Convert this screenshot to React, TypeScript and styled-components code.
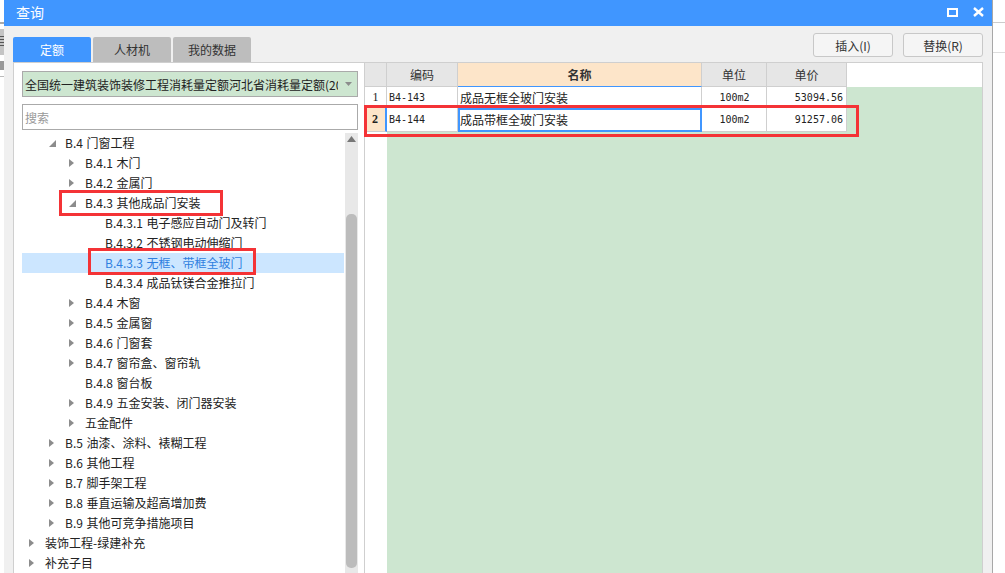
import React from 'react';
import styled, { createGlobalStyle } from 'styled-components';

const GlobalStyle = createGlobalStyle`
  html, body {
    margin: 0;
    padding: 0;
    background: #fff;
    overflow: hidden;
  }
  * {
    box-sizing: border-box;
  }
`;

const FONT = `"Noto Sans CJK SC", "Liberation Sans", sans-serif`;
const BLUE = '#4096ff';
const PEACH = '#fde5c9';
const GREEN = '#cde6d0';
const LINE = '#cfcfcf';

const Page = styled.div`
  position: relative;
  display: flex;
  width: 1005px;
  height: 573px;
  overflow: hidden;
  font-family: ${FONT};
  font-size: 12px;
  color: #222;
`;

const LeftSliver = styled.div`
  width: 4px;
  flex: none;
  background:
    linear-gradient(
      to bottom,
      transparent 0 36px,
      #555 36px 37px,
      transparent 37px 39px,
      #555 39px 40px,
      transparent 40px 42px,
      #555 42px 43px,
      transparent 43px 45px,
      #555 45px 46px,
      transparent 46px
    ),
    linear-gradient(
      to bottom,
      #fff 0 22px,
      #aaa 22px 24px,
      #fff 24px 29px,
      #c4c4c4 29px 55px,
      #fff 55px 61px,
      #999 61px 70px,
      #fff 70px 76px,
      #bbb 76px 77px,
      #fff 77px
    );
`;

const RightSliver = styled.div`
  flex: 1;
  background: linear-gradient(
    to bottom,
    #fff 0 22px,
    #ccc 22px 23px,
    #fff 23px 52px,
    #ddd 52px 53px,
    #fff 53px
  );
`;

const Window = styled.div`
  width: 989px;
  flex: none;
  display: flex;
  flex-direction: column;
  background: #f0f0f0;
  border-right: 1px solid #a8a8a8;
`;

const TitleBar = styled.div`
  height: 26px;
  flex: none;
  display: flex;
  align-items: center;
  padding: 0 8px 2px 12px;
  background: ${BLUE};
  color: #fff;
  font-size: 14px;
`;

const Title = styled.span`
  flex: 1;
`;

const WindowControl = styled.svg`
  display: block;
  margin-left: 15px;
`;

const Body = styled.div`
  flex: 1;
  min-height: 0;
  display: flex;
  flex-direction: column;
  padding: 0 9px;
`;

const TopRow = styled.div`
  height: 36px;
  flex: none;
  display: flex;
  align-items: flex-end;
  justify-content: space-between;
`;

const Tabs = styled.div`
  display: flex;
  gap: 2px;
`;

const Tab = styled.div<{ $active?: boolean }>`
  width: 78px;
  height: 25px;
  display: flex;
  align-items: center;
  justify-content: center;
  border-radius: 2px 2px 0 0;
  background: ${(p) => (p.$active ? BLUE : '#bdbdbd')};
  color: ${(p) => (p.$active ? '#fff' : '#333')};
`;

const Actions = styled.div`
  display: flex;
  gap: 10px;
  margin-bottom: 5px;
`;

const ActionButton = styled.button`
  width: 80px;
  height: 24px;
  padding: 0;
  background: #f5f5f5;
  border: 1px solid #c8c8c8;
  border-radius: 3px;
  font-family: ${FONT};
  font-size: 12px;
  color: #333;
`;

const Panels = styled.div`
  flex: 1;
  min-height: 0;
  display: flex;
`;

const LeftPanel = styled.div`
  width: 352px;
  flex: none;
  display: flex;
  flex-direction: column;
  padding: 8px 6px 0 8px;
  background: #fff;
  border: 1px solid ${LINE};
  border-bottom: none;
`;

const Combo = styled.div`
  height: 26px;
  flex: none;
  display: flex;
  align-items: center;
  padding-left: 2px;
  background: ${GREEN};
  border: 1px solid #aaa;
`;

const ComboText = styled.span`
  width: 313px;
  flex: none;
  overflow: hidden;
  white-space: nowrap;
`;

const ComboCaret = styled.svg`
  display: block;
  margin-left: 7px;
`;

const Search = styled.div`
  height: 26px;
  flex: none;
  display: flex;
  align-items: center;
  margin-top: 7px;
  padding-left: 2px;
  border: 1px solid #aaa;
  color: #999;
`;

const TreeArea = styled.div`
  flex: 1;
  min-height: 0;
  display: flex;
  margin-top: 3px;
`;

const TreeList = styled.div`
  flex: 1;
  min-width: 0;
  margin-right: 1px;
`;

const TreeRow = styled.div<{ $level: number; $selected?: boolean }>`
  height: 20px;
  display: flex;
  align-items: center;
  padding: 0 0 2px ${(p) => p.$level * 20 + 7}px;
  background: ${(p) => (p.$selected ? '#cce6ff' : 'transparent')};
  color: ${(p) => (p.$selected ? '#2f7fe0' : '#222')};
  white-space: pre;
  word-spacing: 1px;
`;

const ArrowSlot = styled.span`
  width: 16px;
  flex: none;
  display: flex;
  align-items: center;
  padding-top: 2px;
`;

const ScrollTrack = styled.div`
  width: 13px;
  flex: none;
  display: flex;
  flex-direction: column;
  align-items: center;
  background: #e8e8e8;
`;

const ScrollUp = styled.svg`
  display: block;
  flex: none;
  margin-top: 3px;
`;

const ScrollThumb = styled.div`
  width: 11px;
  height: 354px;
  flex: none;
  margin-top: 72px;
  border-radius: 5px;
  background: #bcbcbc;
`;

const GridPanel = styled.div`
  width: 618px;
  flex: none;
  display: grid;
  grid-template-columns: 22px 71px 244px 65px 80px 1fr;
  grid-template-rows: 24px 21px 24px 1fr;
  background: #fff;
  border-right: 1px solid ${LINE};
  border-top: 1px solid ${LINE};
`;

const HeaderCell = styled.div<{ $sorted?: boolean }>`
  display: flex;
  align-items: center;
  justify-content: center;
  background: ${(p) => (p.$sorted ? PEACH : '#e6e6e6')};
  border-right: 1px solid ${LINE};
  border-bottom: 1px solid ${(p) => (p.$sorted ? BLUE : LINE)};
  font-weight: ${(p) => (p.$sorted ? 700 : 400)};
  color: #333;
`;

const RowHead = styled.div<{ $current?: boolean }>`
  display: flex;
  align-items: center;
  justify-content: center;
  background: ${(p) => (p.$current ? PEACH : '#fff')};
  border-right: ${(p) => (p.$current ? `2px solid ${BLUE}` : `1px solid ${LINE}`)};
  border-bottom: 1px solid ${LINE};
  font-family: "Liberation Serif", serif;
  font-size: 12px;
  font-weight: ${(p) => (p.$current ? 700 : 400)};
`;

const Cell = styled.div<{ $align?: string; $focused?: boolean; $mono?: boolean }>`
  display: flex;
  align-items: center;
  justify-content: ${(p) => p.$align || 'flex-start'};
  padding: 0 ${(p) => (p.$align === 'flex-end' ? '3px' : '1px')} 0 2px;
  background: #fff;
  border-right: 1px solid ${LINE};
  border-bottom: 1px solid ${LINE};
  outline: ${(p) => (p.$focused ? `2px solid ${BLUE}` : 'none')};
  outline-offset: -2px;
  font-family: ${(p) => (p.$mono ? `"DejaVu Sans Mono", monospace` : FONT)};
  font-size: ${(p) => (p.$mono ? '10px' : '12px')};
  color: #222;
`;

const GreenSide = styled.div`
  grid-column: 6;
  grid-row: 2 / 4;
  background: ${GREEN};
`;

const GreenFill = styled.div`
  grid-column: 2 / -1;
  grid-row: 4;
  background: ${GREEN};
`;

const RedMark = styled.div<{ $x: number; $y: number; $w: number; $h: number }>`
  position: absolute;
  left: ${(p) => p.$x}px;
  top: ${(p) => p.$y}px;
  width: ${(p) => p.$w}px;
  height: ${(p) => p.$h}px;
  border: 3px solid #f43336;
  pointer-events: none;
`;

type Node = {
  label: string;
  level: number;
  arrow?: 'open' | 'closed';
  selected?: boolean;
};

const NODES: Node[] = [
  { label: 'B.4 门窗工程', level: 1, arrow: 'open' },
  { label: 'B.4.1 木门', level: 2, arrow: 'closed' },
  { label: 'B.4.2 金属门', level: 2, arrow: 'closed' },
  { label: 'B.4.3 其他成品门安装', level: 2, arrow: 'open' },
  { label: 'B.4.3.1 电子感应自动门及转门', level: 3 },
  { label: 'B.4.3.2 不锈钢电动伸缩门', level: 3 },
  { label: 'B.4.3.3 无框、带框全玻门', level: 3, selected: true },
  { label: 'B.4.3.4 成品钛镁合金推拉门', level: 3 },
  { label: 'B.4.4 木窗', level: 2, arrow: 'closed' },
  { label: 'B.4.5 金属窗', level: 2, arrow: 'closed' },
  { label: 'B.4.6 门窗套', level: 2, arrow: 'closed' },
  { label: 'B.4.7 窗帘盒、窗帘轨', level: 2, arrow: 'closed' },
  { label: 'B.4.8 窗台板', level: 2 },
  { label: 'B.4.9 五金安装、闭门器安装', level: 2, arrow: 'closed' },
  { label: '五金配件', level: 2, arrow: 'closed' },
  { label: 'B.5 油漆、涂料、裱糊工程', level: 1, arrow: 'closed' },
  { label: 'B.6 其他工程', level: 1, arrow: 'closed' },
  { label: 'B.7 脚手架工程', level: 1, arrow: 'closed' },
  { label: 'B.8 垂直运输及超高增加费', level: 1, arrow: 'closed' },
  { label: 'B.9 其他可竞争措施项目', level: 1, arrow: 'closed' },
  { label: '装饰工程-绿建补充', level: 0, arrow: 'closed' },
  { label: '补充子目', level: 0, arrow: 'closed' },
];

const Arrow = ({ kind }: { kind?: 'open' | 'closed' }) => (
  <ArrowSlot>
    {kind === 'closed' && (
      <svg width="5" height="8" viewBox="0 0 5 8">
        <polygon points="0,0 5,4 0,8" fill="#8c8c8c" />
      </svg>
    )}
    {kind === 'open' && (
      <svg width="7" height="7" viewBox="0 0 7 7">
        <polygon points="7,0 7,7 0,7" fill="#8c8c8c" />
      </svg>
    )}
  </ArrowSlot>
);

const App = () => (
  <Page>
    <GlobalStyle />
    <LeftSliver />
    <Window>
      <TitleBar>
        <Title>查询</Title>
        <WindowControl width="11" height="9" viewBox="0 0 11 9">
          <rect x="1" y="1" width="9" height="7" fill="none" stroke="#fff" strokeWidth="2" />
        </WindowControl>
        <WindowControl width="11" height="10" viewBox="0 0 11 10">
          <path d="M1 1 L10 9 M10 1 L1 9" stroke="#fff" strokeWidth="2.4" fill="none" />
        </WindowControl>
      </TitleBar>
      <Body>
        <TopRow>
          <Tabs>
            <Tab $active>定额</Tab>
            <Tab>人材机</Tab>
            <Tab>我的数据</Tab>
          </Tabs>
          <Actions>
            <ActionButton>插入(I)</ActionButton>
            <ActionButton>替换(R)</ActionButton>
          </Actions>
        </TopRow>
        <Panels>
          <LeftPanel>
            <Combo>
              <ComboText>全国统一建筑装饰装修工程消耗量定额河北省消耗量定额(2023)</ComboText>
              <ComboCaret width="7" height="4" viewBox="0 0 7 4">
                <polygon points="0,0 7,0 3.5,4" fill="#8c8c8c" />
              </ComboCaret>
            </Combo>
            <Search>搜索</Search>
            <TreeArea>
              <TreeList>
                {NODES.map((n) => (
                  <TreeRow key={n.label} $level={n.level} $selected={n.selected}>
                    <Arrow kind={n.arrow} />
                    {n.label}
                  </TreeRow>
                ))}
              </TreeList>
              <ScrollTrack>
                <ScrollUp width="9" height="6" viewBox="0 0 9 6">
                  <polygon points="0,6 9,6 4.5,0" fill="#777" />
                </ScrollUp>
                <ScrollThumb />
              </ScrollTrack>
            </TreeArea>
          </LeftPanel>
          <GridPanel>
            <HeaderCell />
            <HeaderCell>编码</HeaderCell>
            <HeaderCell $sorted>名称</HeaderCell>
            <HeaderCell>单位</HeaderCell>
            <HeaderCell>单价</HeaderCell>
            <div />

            <RowHead>1</RowHead>
            <Cell $mono>B4-143</Cell>
            <Cell>成品无框全玻门安装</Cell>
            <Cell $mono $align="center">100m2</Cell>
            <Cell $mono $align="flex-end">53094.56</Cell>
            <GreenSide />

            <RowHead $current>2</RowHead>
            <Cell $mono>B4-144</Cell>
            <Cell $focused>成品带框全玻门安装</Cell>
            <Cell $mono $align="center">100m2</Cell>
            <Cell $mono $align="flex-end">91257.06</Cell>

            <div />
            <GreenFill />
          </GridPanel>
        </Panels>
      </Body>
    </Window>
    <RightSliver />
    <RedMark $x={59} $y={190} $w={164} $h={26} />
    <RedMark $x={88} $y={248} $w={168} $h={27} />
    <RedMark $x={364} $y={105} $w={495} $h={32} />
  </Page>
);

export default App;
